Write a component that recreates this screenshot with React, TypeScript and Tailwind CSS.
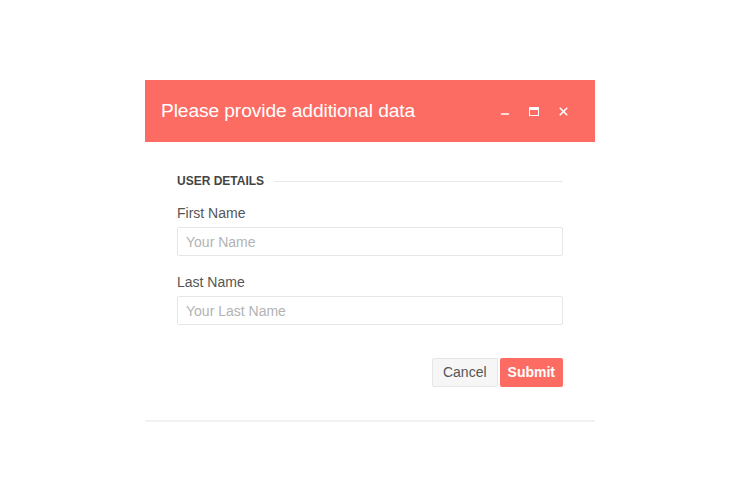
import { Minus, X } from "lucide-react";

export default function App() {
  return (
    <div className="w-[730px] h-[496px] bg-white flex justify-center pt-[80px] pl-[10px] font-['Liberation_Sans',Arial,sans-serif]">
      <div className="w-[450px] h-[342px] flex flex-col border-b-2 border-[#f1f1f1]">
        <div className="h-[62px] bg-[#fd6c63] flex items-center justify-between pl-4 pr-[24px]">
          <h1 className="text-white text-[19.2px] tracking-[-0.1px]">Please provide additional data</h1>
          <div className="flex items-center gap-[13px] text-white">
            <span className="w-4 h-4 flex items-center justify-center">
              <Minus size={12} strokeWidth={3} className="mt-[6px]" />
            </span>
            <span className="w-4 h-4 flex items-center justify-center">
              <span className="block w-[10px] h-[9px] border border-white border-t-[3px]" />
            </span>
            <span className="w-4 h-4 flex items-center justify-center">
              <X size={13} strokeWidth={3} />
            </span>
          </div>
        </div>
        <div className="px-8 pt-[30px]">
          <div className="flex items-center gap-[10px]">
            <h2 className="text-[12px] font-bold text-[#444] uppercase">User Details</h2>
            <div className="flex-1 h-px bg-[#e8e8e8]" />
          </div>
          <label className="block mt-[13px] text-[14px] text-[#555]">First Name</label>
          <input
            className="mt-[3px] w-full h-[29px] border border-[#e6e6e6] rounded-[2px] px-2 text-[14px] placeholder-[#b3b3b3] outline-none"
            placeholder="Your Name"
          />
          <label className="block mt-[16px] text-[14px] text-[#555]">Last Name</label>
          <input
            className="mt-[3px] w-full h-[29px] border border-[#e6e6e6] rounded-[2px] px-2 text-[14px] placeholder-[#b3b3b3] outline-none"
            placeholder="Your Last Name"
          />
          <div className="flex justify-end gap-[2px] mt-[33px]">
            <button className="h-[29px] px-[10px] border border-[#e6e6e6] bg-[#f6f6f6] rounded-[2px] text-[14px] text-[#555]">
              Cancel
            </button>
            <button className="h-[29px] px-[8px] bg-[#fd6c63] rounded-[2px] text-[14px] font-bold text-white">
              Submit
            </button>
          </div>
        </div>
      </div>
    </div>
  );
}
